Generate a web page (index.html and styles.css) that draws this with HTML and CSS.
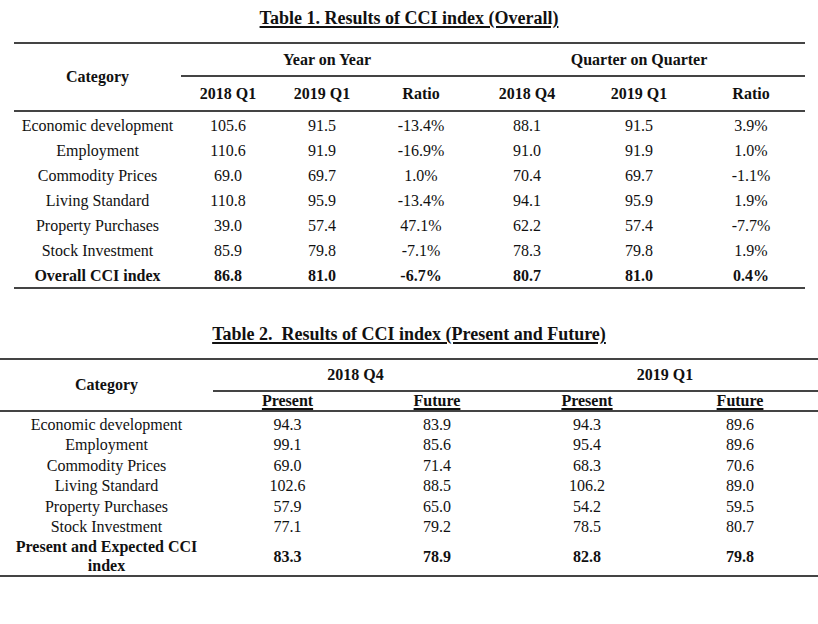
FILE: index.html
```html
<!DOCTYPE html>
<html>
<head>
<meta charset="utf-8">
<link rel="stylesheet" href="styles.css">
</head>
<body>
<h1 class="title title-1">Table 1. Results of CCI index (Overall)</h1>
<table class="tbl tbl-1">
  <colgroup>
    <col class="c167"><col class="c94"><col class="c94"><col class="c104"><col class="c108"><col class="c116"><col class="c108">
  </colgroup>
  <thead>
    <tr class="h1row">
      <th rowspan="2" class="cat">Category</th>
      <th colspan="3" class="grp">Year on Year</th>
      <th colspan="3" class="grp">Quarter on Quarter</th>
    </tr>
    <tr class="h2row">
      <th>2018 Q1</th><th>2019 Q1</th><th>Ratio</th><th>2018 Q4</th><th>2019 Q1</th><th>Ratio</th>
    </tr>
  </thead>
  <tbody>
    <tr><td>Economic development</td><td>105.6</td><td>91.5</td><td>-13.4%</td><td>88.1</td><td>91.5</td><td>3.9%</td></tr>
    <tr><td>Employment</td><td>110.6</td><td>91.9</td><td>-16.9%</td><td>91.0</td><td>91.9</td><td>1.0%</td></tr>
    <tr><td>Commodity Prices</td><td>69.0</td><td>69.7</td><td>1.0%</td><td>70.4</td><td>69.7</td><td>-1.1%</td></tr>
    <tr><td>Living Standard</td><td>110.8</td><td>95.9</td><td>-13.4%</td><td>94.1</td><td>95.9</td><td>1.9%</td></tr>
    <tr><td>Property Purchases</td><td>39.0</td><td>57.4</td><td>47.1%</td><td>62.2</td><td>57.4</td><td>-7.7%</td></tr>
    <tr><td>Stock Investment</td><td>85.9</td><td>79.8</td><td>-7.1%</td><td>78.3</td><td>79.8</td><td>1.9%</td></tr>
    <tr class="total"><td>Overall CCI index</td><td>86.8</td><td>81.0</td><td>-6.7%</td><td>80.7</td><td>81.0</td><td>0.4%</td></tr>
  </tbody>
</table>

<h1 class="title title-2">Table 2.&nbsp; Results of CCI index (Present and Future)</h1>
<table class="tbl tbl-2">
  <colgroup>
    <col class="c213"><col class="c149"><col class="c150"><col class="c150"><col class="c156">
  </colgroup>
  <thead>
    <tr class="h1row">
      <th rowspan="2" class="cat">Category</th>
      <th colspan="2" class="grp grp-a">2018 Q4</th>
      <th colspan="2" class="grp">2019 Q1</th>
    </tr>
    <tr class="h2row">
      <th><u>Present</u></th><th><u>Future</u></th><th><u>Present</u></th><th><u>Future</u></th>
    </tr>
  </thead>
  <tbody>
    <tr class="first"><td>Economic development</td><td>94.3</td><td>83.9</td><td>94.3</td><td>89.6</td></tr>
    <tr><td>Employment</td><td>99.1</td><td>85.6</td><td>95.4</td><td>89.6</td></tr>
    <tr><td>Commodity Prices</td><td>69.0</td><td>71.4</td><td>68.3</td><td>70.6</td></tr>
    <tr><td>Living Standard</td><td>102.6</td><td>88.5</td><td>106.2</td><td>89.0</td></tr>
    <tr><td>Property Purchases</td><td>57.9</td><td>65.0</td><td>54.2</td><td>59.5</td></tr>
    <tr><td>Stock Investment</td><td>77.1</td><td>79.2</td><td>78.5</td><td>80.7</td></tr>
    <tr class="total"><td>Present and Expected CCI index</td><td>83.3</td><td>78.9</td><td>82.8</td><td>79.8</td></tr>
  </tbody>
</table>
</body>
</html>
```

FILE: styles.css
```css
html, body {
  margin: 0;
  padding: 0;
  background: #ffffff;
}

body {
  width: 818px;
  height: 624px;
  color: #111111;
  font-family: "Liberation Serif", "Times New Roman", serif;
  font-size: 16px;
}

.title {
  margin: 0;
  text-align: center;
  font-size: 18px;
  font-weight: bold;
  line-height: 22px;
  text-decoration: underline;
  text-decoration-thickness: 1.5px;
  text-underline-offset: 2px;
}

.title-1 {
  padding-top: 7px;
}

.title-2 {
  margin-top: 34px;
}

.tbl {
  border-collapse: collapse;
  table-layout: fixed;
}

.tbl th,
.tbl td {
  padding: 0;
  text-align: center;
  vertical-align: middle;
  white-space: nowrap;
}

.tbl th {
  font-weight: bold;
}

.tbl thead tr.h1row th {
  border-top: 2px solid #444444;
}

.tbl th.grp {
  border-bottom: 2px solid #444444;
}

.tbl thead tr.h2row th {
  border-bottom: 2px solid #444444;
}

.tbl th.cat {
  border-bottom: 2px solid #444444;
}

.tbl tbody tr:last-child td {
  border-bottom: 2px solid #444444;
}

.tbl tr.total td {
  font-weight: bold;
}

/* Table 1 */
.tbl-1 {
  width: 791px;
  margin: 13px 0 0 14px;
}

.tbl-1 tr.h1row { height: 33px; }
.tbl-1 tr.h2row { height: 35px; }
.tbl-1 tbody tr { height: 25px; }
.tbl-1 tbody td { line-height: 23px; padding-top: 2px; }

/* Table 2 */
.tbl-2 {
  width: 818px;
  margin: 13px 0 0 0;
}

.tbl-2 tr.h1row { height: 32px; }
.tbl-2 tr.h2row { height: 19px; }
.tbl-2 tr.h2row th { line-height: 18px; }
.tbl-2 th.grp-a { padding-right: 14px; }
.tbl-2 tbody td { line-height: 20.4px; }
.tbl-2 tbody tr.first td { padding-top: 3px; }
.tbl-2 tr.total td { line-height: 19px; }
.tbl-2 tr.total td:first-child { white-space: normal; padding: 0 10px; }

.tbl-2 u {
  text-decoration-thickness: 1.5px;
  text-underline-offset: 2px;
}

col.c94 { width: 94px; }
col.c104 { width: 104px; }
col.c108 { width: 108px; }
col.c116 { width: 116px; }
col.c149 { width: 149px; }
col.c150 { width: 150px; }
col.c156 { width: 156px; }
col.c167 { width: 167px; }
col.c213 { width: 213px; }
```
